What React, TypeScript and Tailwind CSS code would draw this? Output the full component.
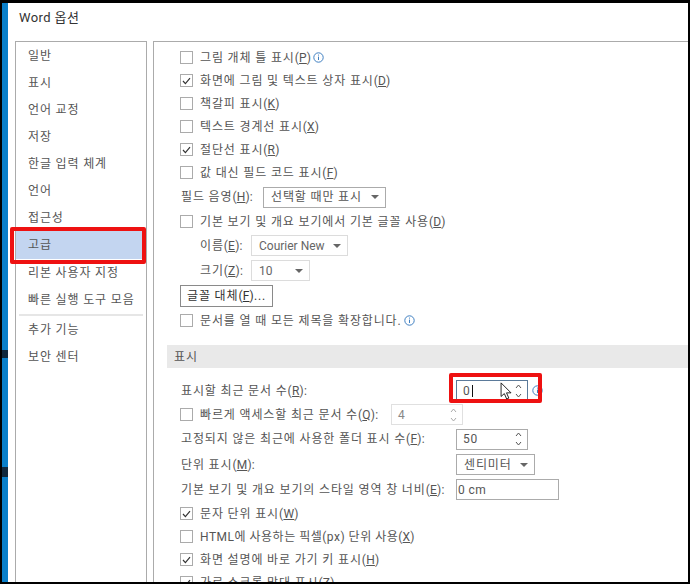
const font = "[font-family:Roboto,'Noto_Sans_CJK_KR',sans-serif]";

const navTop = ["일반", "표시", "언어 교정", "저장", "한글 입력 체계", "언어", "접근성"];

const Key = ({ k }: { k: string }) => (
  <span className="tracking-[0.2px]">
    (<span className="underline">{k}</span>)
  </span>
);

const Box = ({ checked }: { checked?: boolean }) => (
  <span className="flex h-[13px] w-[13px] shrink-0 items-center justify-center border border-[#ababab] bg-white">
    {checked && (
      <svg width="9" height="8" viewBox="0 0 9 8" fill="none">
        <path d="M1 4l2.4 2.6L8 1.2" stroke="#333" strokeWidth="1.2" />
      </svg>
    )}
  </span>
);

const Info = ({ ml = "ml-[2px]" }: { ml?: string }) => (
  <svg width="11" height="11" viewBox="0 0 11 11" fill="none" className={`${ml} shrink-0`}>
    <circle cx="5.5" cy="5.5" r="4.7" stroke="#3f7fc1" />
    <path d="M5.5 4.6v3.4M5.5 2.6v1" stroke="#3f7fc1" />
  </svg>
);

const Caret = () => (
  <svg width="8" height="4" viewBox="0 0 8 4" className="shrink-0">
    <path d="M0 0h8L4 4z" fill="#666" />
  </svg>
);

const Spin = ({ color = "#555" }: { color?: string }) => (
  <svg width="7" height="16" viewBox="0 0 7 16" fill="none" className="shrink-0">
    <path d="M1 5l2.5-3L6 5M1 11l2.5 3L6 11" stroke={color} />
  </svg>
);

const Check = ({ checked, children }: { checked?: boolean; children: React.ReactNode }) => (
  <div className="flex h-[23px] items-center gap-[7px]">
    <Box checked={checked} />
    <span className="flex items-center whitespace-pre">{children}</span>
  </div>
);

const Select = ({ value, w, light }: { value: string; w: string; light?: boolean }) => (
  <div
    className={`flex h-[21px] ${w} items-center justify-between border pl-[7px] pr-[6px] whitespace-nowrap ${
      light ? "border-[#dcdcdc] tracking-normal text-[#666]" : "border-[#ababab]"
    }`}
  >
    <span>{value}</span>
    <Caret />
  </div>
);

export default function App() {
  return (
    <div
      className={`flex h-[584px] w-[690px] overflow-hidden border-x-2 border-t-[3px] border-b-2 border-black bg-white text-[12px] leading-none tracking-[0.85px] text-[#555] ${font}`}
    >
      {/* desktop strip behind the dialog */}
      <div className="relative w-[6px] shrink-0 bg-[#0a7fc9]">
        <div className="absolute left-0 top-[347px] h-[8px] w-[6px] bg-[#10283c]" />
        <div className="absolute left-0 top-[464px] h-[10px] w-[6px] bg-[#10283c]" />
      </div>

      <div className="relative flex min-w-0 flex-1 flex-col bg-white">
        <div className="flex h-[38px] shrink-0 items-center pb-[9px] pl-[11px] text-[13px] tracking-[0.4px] text-[#333]">
          Word 옵션
        </div>

        <div className="flex min-h-0 flex-1 pl-[7px]">
          {/* category list */}
          <div className="flex w-[132px] shrink-0 flex-col border-x border-t border-[#ababab]">
            {navTop.map((label) => (
              <div key={label} className="flex h-[27px] items-center pl-[12px]">
                {label}
              </div>
            ))}
            <div className="flex h-[28px] items-center bg-[#c3d5f0] pl-[12px]">고급</div>
            <div className="flex h-[27px] items-center pl-[12px]">리본 사용자 지정</div>
            <div className="flex h-[27px] items-center pl-[12px]">빠른 실행 도구 모음</div>
            <div className="mx-[3px] mt-[1px] h-[2px] bg-[#e6e6e6]" />
            <div className="flex h-[27px] items-center pl-[12px]">추가 기능</div>
            <div className="flex h-[27px] items-center pl-[12px]">보안 센터</div>
          </div>

          {/* settings pane */}
          <div className="ml-[6px] flex min-w-0 flex-1 flex-col overflow-hidden border-l border-t border-[#ababab] pl-[13px]">
            <div className="flex flex-col pl-[13px] pt-[4px]">
              <Check>
                그림 개체 틀 표시
                <Key k="P" />
                <Info />
              </Check>
              <Check checked>
                화면에 그림 및 텍스트 상자 표시
                <Key k="D" />
              </Check>
              <Check>
                책갈피 표시
                <Key k="K" />
              </Check>
              <Check>
                텍스트 경계선 표시
                <Key k="X" />
              </Check>
              <Check checked>
                절단선 표시
                <Key k="R" />
              </Check>
              <Check>
                값 대신 필드 코드 표시
                <Key k="F" />
              </Check>
              <div className="flex h-[26px] items-center gap-[9px] pl-[1px]">
                <span className="w-[73px] whitespace-nowrap">
                  필드 음영
                  <Key k="H" />:
                </span>
                <Select value="선택할 때만 표시" w="w-[123px]" />
              </div>
              <Check>
                기본 보기 및 개요 보기에서 기본 글꼴 사용
                <Key k="D" />
              </Check>
              <div className="flex h-[25px] items-center pl-[20px]">
                <span className="w-[51px] whitespace-nowrap">
                  이름
                  <Key k="E" />:
                </span>
                <Select value="Courier New" w="w-[97px]" light />
              </div>
              <div className="flex h-[25px] items-center pl-[20px]">
                <span className="w-[51px] whitespace-nowrap">
                  크기
                  <Key k="Z" />:
                </span>
                <Select value="10" w="w-[59px]" light />
              </div>
              <button className="mt-[2px] flex h-[22px] w-[93px] items-center justify-center whitespace-nowrap border border-[#8a8a8a] tracking-[0.85px] text-[#333]">
                글꼴 대체
                <Key k="F" />
                ...
              </button>
              <div className="mt-[2px]">
                <Check>
                  문서를 열 때 모든 제목을 확장합니다.
                  <Info />
                </Check>
              </div>
            </div>

            <div className="mt-[13px] flex h-[23px] shrink-0 items-center bg-[#e9e9e9] pl-[7px]">표시</div>

            <div className="flex flex-col pl-[13px] pt-[10px]">
              <div className="flex h-[25px] items-center pl-[1px]">
                <span className="w-[275px] whitespace-nowrap">
                  표시할 최근 문서 수
                  <Key k="R" />:
                </span>
                <div className="flex h-[21px] w-[72px] items-center justify-between border border-[#5b7a9a] pl-[6px] pr-[5px]">
                  <span className="border-r border-[#111] pr-[1px]">0</span>
                  <Spin />
                </div>
                <Info ml="ml-[4px]" />
              </div>
              <div className="flex h-[23px] items-center">
                <Box />
                <span className="ml-[7px] w-[191px] whitespace-nowrap">
                  빠르게 액세스할 최근 문서 수
                  <Key k="Q" />:
                </span>
                <div className="flex h-[21px] w-[72px] items-center justify-between border border-[#e0e0e0] pl-[6px] pr-[5px] text-[#888]">
                  <span>4</span>
                  <Spin color="#aaa" />
                </div>
              </div>
              <div className="flex h-[26px] items-center pl-[1px]">
                <span className="w-[275px] whitespace-nowrap">
                  고정되지 않은 최근에 사용한 폴더 표시 수
                  <Key k="F" />:
                </span>
                <div className="flex h-[21px] w-[72px] items-center justify-between border border-[#ababab] pl-[6px] pr-[5px]">
                  <span>50</span>
                  <Spin />
                </div>
              </div>
              <div className="flex h-[25px] items-center pl-[1px]">
                <span className="w-[275px] whitespace-nowrap">
                  단위 표시
                  <Key k="M" />:
                </span>
                <Select value="센티미터" w="w-[79px]" />
              </div>
              <div className="flex h-[25px] items-center pl-[1px]">
                <span className="w-[275px] whitespace-nowrap">
                  기본 보기 및 개요 보기의 스타일 영역 창 너비
                  <Key k="E" />:
                </span>
                <div className="flex h-[21px] w-[103px] items-center border border-[#ababab] pl-[1px] tracking-[0.4px]">
                  0 cm
                </div>
              </div>
              <Check checked>
                문자 단위 표시
                <Key k="W" />
              </Check>
              <Check>
                <span className="tracking-[0.5px]">HTML에 사용하는 픽셀(px) 단위 사용</span>
                <Key k="X" />
              </Check>
              <Check checked>
                화면 설명에 바로 가기 키 표시
                <Key k="H" />
              </Check>
              <Check checked>
                가로 스크롤 막대 표시
                <Key k="Z" />
              </Check>
            </div>
          </div>
        </div>

        {/* red callouts and mouse pointer over the dialog */}
        <div className="absolute left-[2px] top-[224px] h-[37px] w-[136px] rounded-[2px] border-[4px] border-[#ee1111]" />
        <div className="absolute left-[441px] top-[370px] h-[30px] w-[93px] rounded-[2px] border-[4px] border-[#ee1111]" />
        <svg width="13" height="19" viewBox="0 0 14 21" className="absolute left-[492px] top-[379px]">
          <path d="M1 1v15l3.6-3.2 2.6 6 2.4-1-2.6-5.8H12z" fill="#fff" stroke="#111" strokeWidth="1" />
        </svg>
      </div>
    </div>
  );
}
